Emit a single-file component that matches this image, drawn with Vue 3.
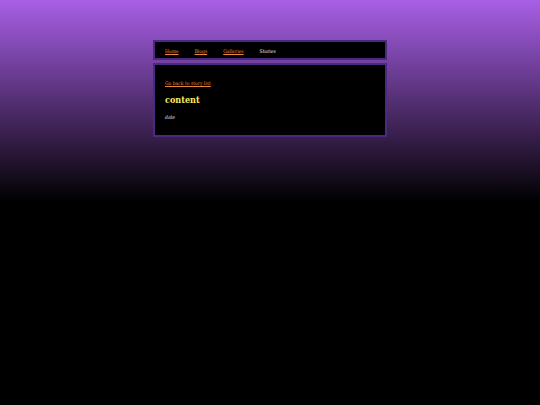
<script setup>
const links = ['Home', 'Blogs', 'Galleries']
</script>

<template>
  <div class="page">
    <nav class="panel nav">
      <a v-for="link in links" :key="link" :href="'#' + link.toLowerCase()">{{ link }}</a>
      <span>Stories</span>
    </nav>
    <main class="panel story">
      <a href="#stories">Go back to story list</a>
      <h1>content</h1>
      <em>date</em>
    </main>
  </div>
</template>

<style>
body {
  min-height: 100vh;
  background: #000 linear-gradient(#a85fe6, #000 202px) no-repeat;
}
</style>

<style scoped>
.page {
  display: flex;
  flex-direction: column;
  gap: 3px;
  box-sizing: border-box;
  width: calc(50% - 36px);
  min-width: 234px;
  max-width: 640px;
  margin: 0 auto;
  padding: 40px 0;
  color: #eee;
  font-family: "Roboto Slab", "DejaVu Serif Condensed", "DejaVu Serif", serif;
  font-size: 5px;
  line-height: 8px;
}

.panel {
  border: 2px solid #492a80;
  background: #000;
}

.nav {
  display: flex;
  gap: 16px;
  padding: 5px 10px 3px;
}

.story {
  display: flex;
  flex-direction: column;
  align-items: flex-start;
  padding: 14px 10px;
}

a {
  color: #e8873a;
}

h1 {
  margin: 7px 0;
  color: #ffec5c;
  font-size: 9px;
  line-height: 12px;
}
</style>
